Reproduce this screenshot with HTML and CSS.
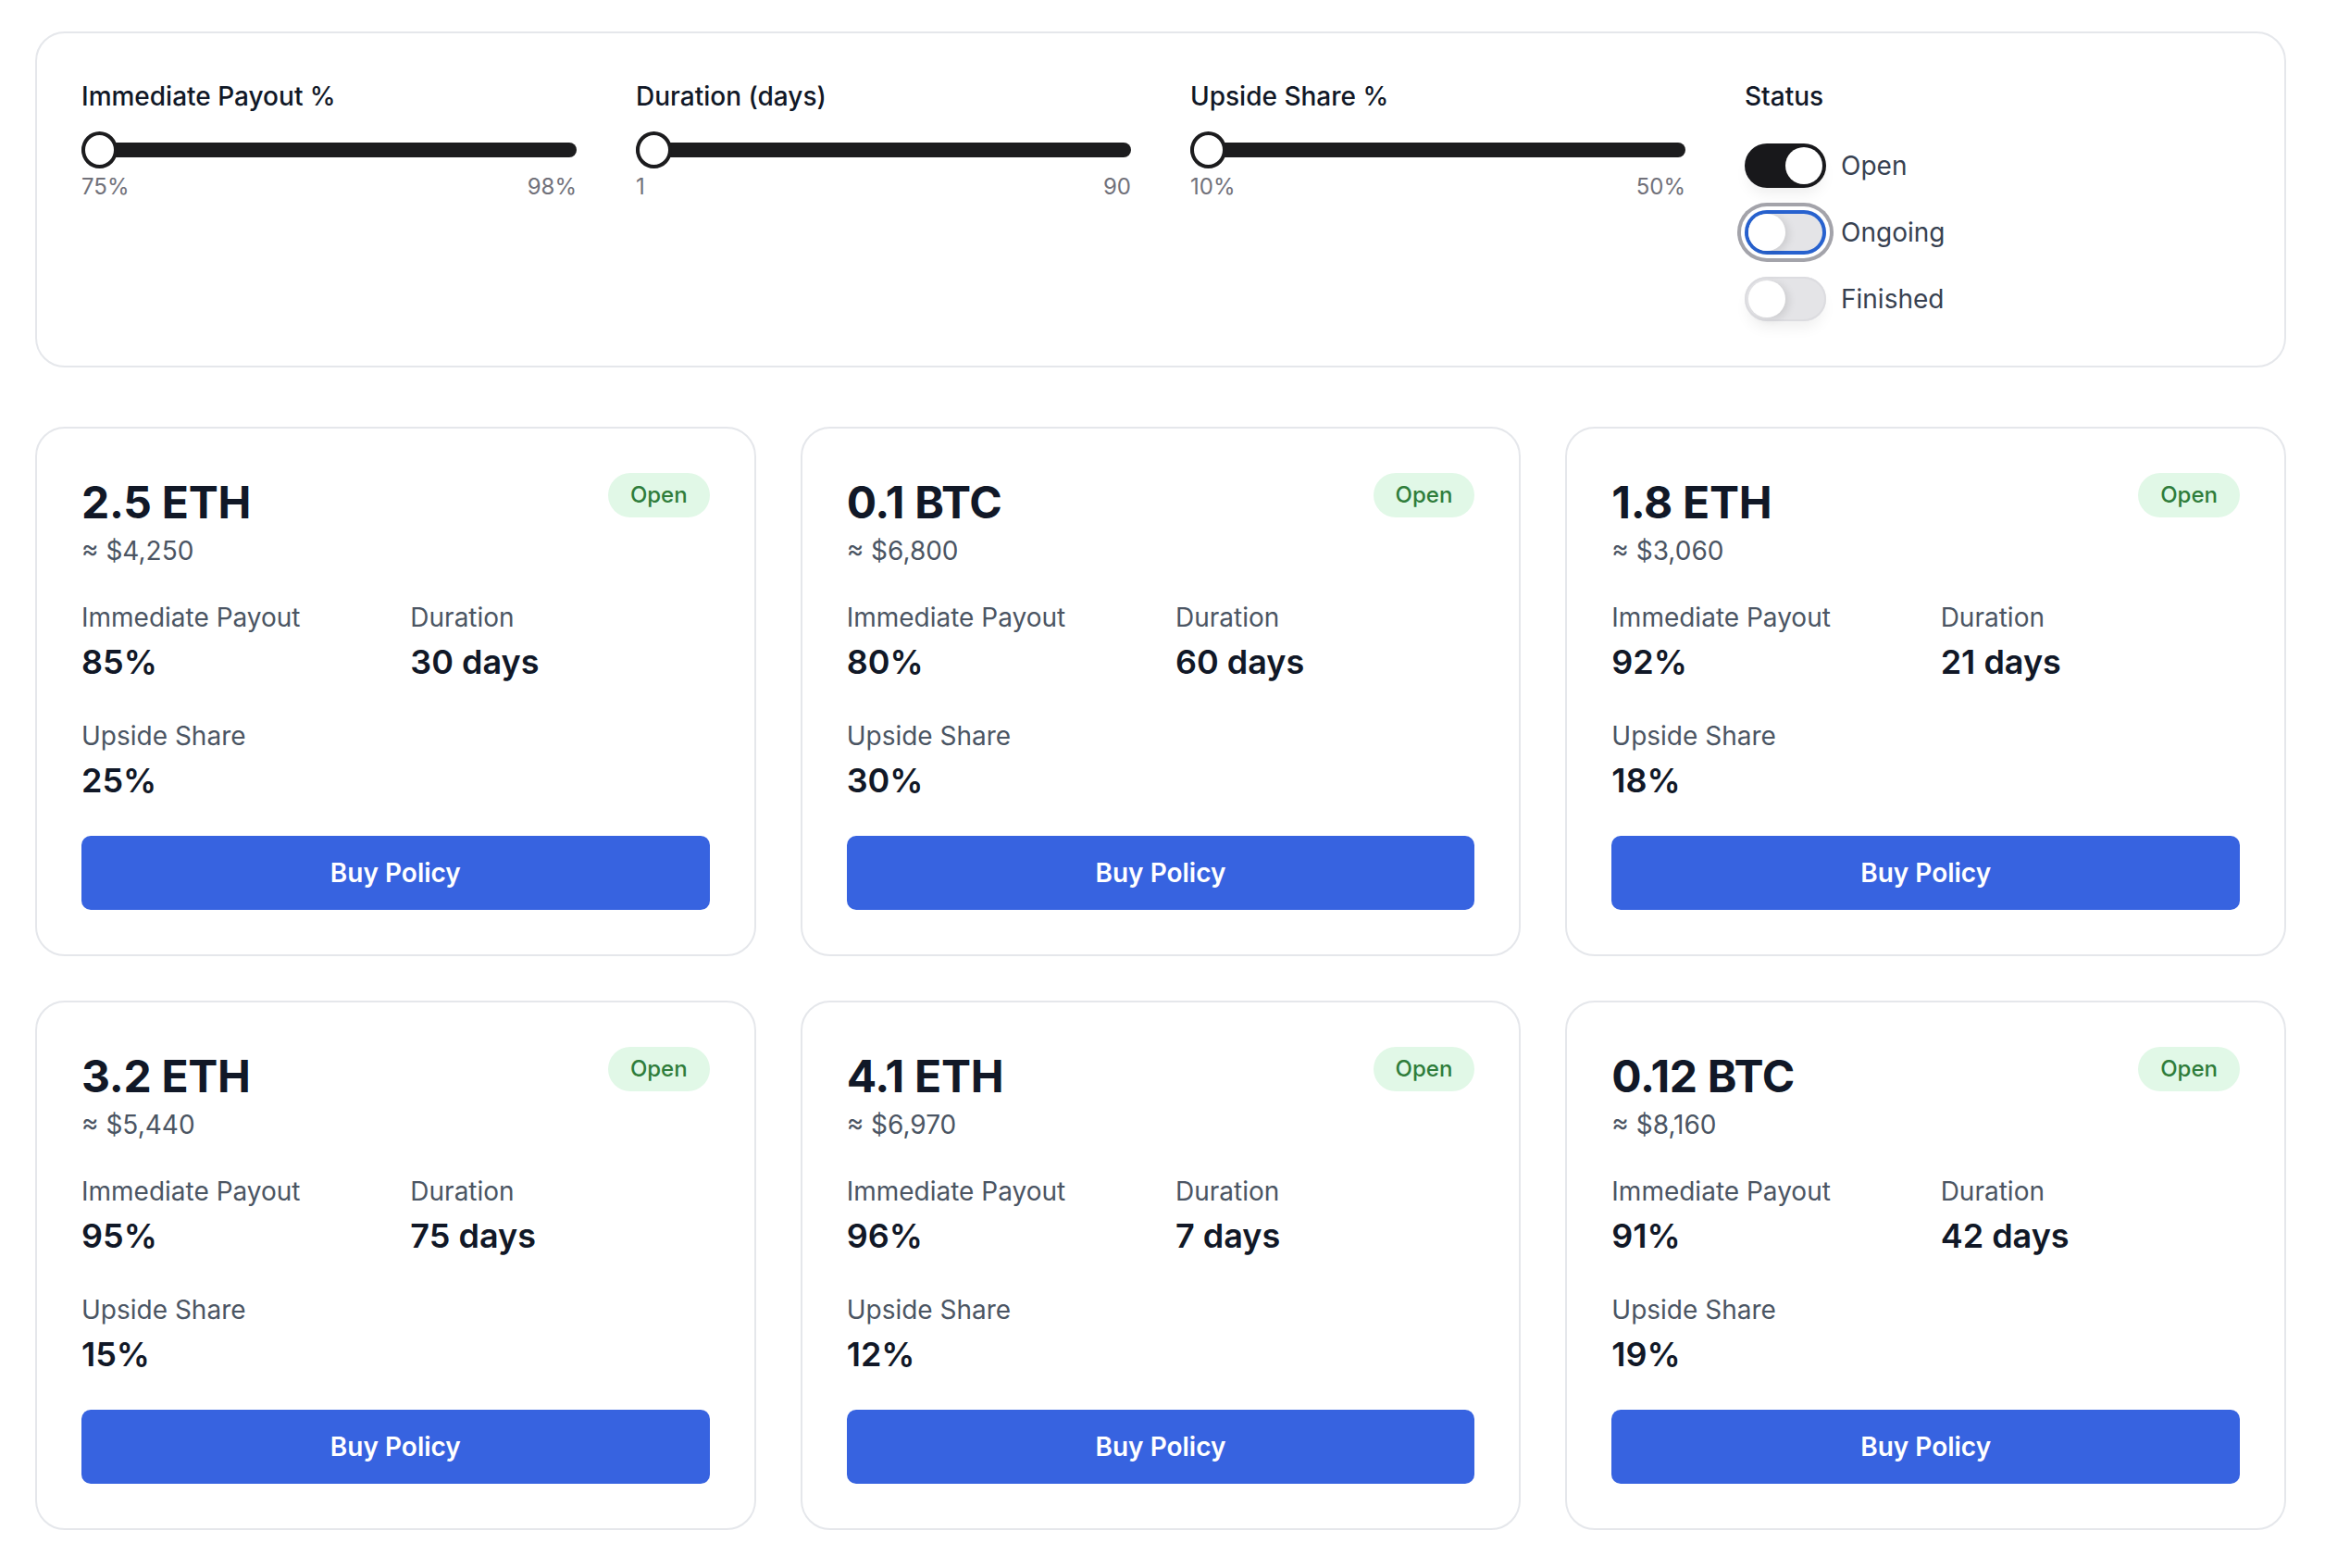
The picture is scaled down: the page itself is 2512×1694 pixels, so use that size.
FILE: index.html
```html
<!DOCTYPE html>
<html lang="en">
<head>
<meta charset="utf-8">
<title>Policies</title>
<link rel="stylesheet" href="styles.css">
</head>
<body>
<div class="page">
  <section class="filters">
    <div class="filter">
      <div class="filter-label">Immediate Payout %</div>
      <input class="range" type="range" min="75" max="98" value="75">
      <div class="range-ends"><span>75%</span><span>98%</span></div>
    </div>
    <div class="filter">
      <div class="filter-label">Duration (days)</div>
      <input class="range" type="range" min="1" max="90" value="1">
      <div class="range-ends"><span>1</span><span>90</span></div>
    </div>
    <div class="filter">
      <div class="filter-label">Upside Share %</div>
      <input class="range" type="range" min="10" max="50" value="10">
      <div class="range-ends"><span>10%</span><span>50%</span></div>
    </div>
    <div class="filter">
      <div class="filter-label">Status</div>
      <div class="toggles">
        <div class="toggle-row"><span class="switch on"><span class="knob"></span></span><span class="toggle-text">Open</span></div>
        <div class="toggle-row"><span class="switch focus"><span class="knob"></span></span><span class="toggle-text">Ongoing</span></div>
        <div class="toggle-row"><span class="switch"><span class="knob"></span></span><span class="toggle-text">Finished</span></div>
      </div>
    </div>
  </section>

  <section class="grid">
    <article class="card">
      <div class="card-head">
        <div>
          <div class="amount">2.5 ETH</div>
          <div class="usd">≈ $4,250</div>
        </div>
        <span class="badge">Open</span>
      </div>
      <div class="stats">
        <div><div class="stat-label">Immediate Payout</div><div class="stat-value">85%</div></div>
        <div><div class="stat-label">Duration</div><div class="stat-value">30 days</div></div>
        <div><div class="stat-label">Upside Share</div><div class="stat-value">25%</div></div>
      </div>
      <button class="buy">Buy Policy</button>
    </article>

    <article class="card">
      <div class="card-head">
        <div>
          <div class="amount">0.1 BTC</div>
          <div class="usd">≈ $6,800</div>
        </div>
        <span class="badge">Open</span>
      </div>
      <div class="stats">
        <div><div class="stat-label">Immediate Payout</div><div class="stat-value">80%</div></div>
        <div><div class="stat-label">Duration</div><div class="stat-value">60 days</div></div>
        <div><div class="stat-label">Upside Share</div><div class="stat-value">30%</div></div>
      </div>
      <button class="buy">Buy Policy</button>
    </article>

    <article class="card">
      <div class="card-head">
        <div>
          <div class="amount">1.8 ETH</div>
          <div class="usd">≈ $3,060</div>
        </div>
        <span class="badge">Open</span>
      </div>
      <div class="stats">
        <div><div class="stat-label">Immediate Payout</div><div class="stat-value">92%</div></div>
        <div><div class="stat-label">Duration</div><div class="stat-value">21 days</div></div>
        <div><div class="stat-label">Upside Share</div><div class="stat-value">18%</div></div>
      </div>
      <button class="buy">Buy Policy</button>
    </article>

    <article class="card">
      <div class="card-head">
        <div>
          <div class="amount">3.2 ETH</div>
          <div class="usd">≈ $5,440</div>
        </div>
        <span class="badge">Open</span>
      </div>
      <div class="stats">
        <div><div class="stat-label">Immediate Payout</div><div class="stat-value">95%</div></div>
        <div><div class="stat-label">Duration</div><div class="stat-value">75 days</div></div>
        <div><div class="stat-label">Upside Share</div><div class="stat-value">15%</div></div>
      </div>
      <button class="buy">Buy Policy</button>
    </article>

    <article class="card">
      <div class="card-head">
        <div>
          <div class="amount">4.1 ETH</div>
          <div class="usd">≈ $6,970</div>
        </div>
        <span class="badge">Open</span>
      </div>
      <div class="stats">
        <div><div class="stat-label">Immediate Payout</div><div class="stat-value">96%</div></div>
        <div><div class="stat-label">Duration</div><div class="stat-value">7 days</div></div>
        <div><div class="stat-label">Upside Share</div><div class="stat-value">12%</div></div>
      </div>
      <button class="buy">Buy Policy</button>
    </article>

    <article class="card">
      <div class="card-head">
        <div>
          <div class="amount">0.12 BTC</div>
          <div class="usd">≈ $8,160</div>
        </div>
        <span class="badge">Open</span>
      </div>
      <div class="stats">
        <div><div class="stat-label">Immediate Payout</div><div class="stat-value">91%</div></div>
        <div><div class="stat-label">Duration</div><div class="stat-value">42 days</div></div>
        <div><div class="stat-label">Upside Share</div><div class="stat-value">19%</div></div>
      </div>
      <button class="buy">Buy Policy</button>
    </article>
  </section>
</div>
</body>
</html>
```

FILE: styles.css
```css
* { box-sizing: border-box; }

html, body {
  margin: 0;
  background: #ffffff;
}

body {
  font-family: Inter, "Noto Sans", "Liberation Sans", sans-serif;
  color: #111827;
  padding: 34px 42px 40px 38px;
}

.page {
  width: 2432px;
}

/* ---------- filters panel ---------- */
.filters {
  border: 2px solid #e5e7eb;
  border-radius: 32px;
  padding: 48px;
  display: grid;
  grid-template-columns: repeat(4, 1fr);
  column-gap: 64px;
  align-items: start;
  margin-bottom: 64px;
}

.filter-label {
  font-size: 28px;
  line-height: 40px;
  font-weight: 500;
  color: #111827;
  margin-bottom: 16px;
}

.range {
  -webkit-appearance: none;
  appearance: none;
  display: block;
  width: 100%;
  height: 44px;
  margin: 0;
  background: transparent;
}

.range::-webkit-slider-runnable-track {
  height: 16px;
  background: #1c1c1e;
  border-radius: 8px;
}

.range::-webkit-slider-thumb {
  -webkit-appearance: none;
  appearance: none;
  box-sizing: border-box;
  width: 39px;
  height: 40px;
  margin-top: -12px;
  border-radius: 50%;
  background: #ffffff;
  border: 4px solid #1c1c1e;
}

.range-ends {
  display: flex;
  justify-content: space-between;
  margin-top: 2px;
  font-size: 24px;
  line-height: 32px;
  color: #71717a;
}

.toggles {
  display: flex;
  flex-direction: column;
  gap: 24px;
  margin-top: 31px;
}

.toggle-row {
  display: flex;
  align-items: center;
  gap: 16px;
}

.switch {
  width: 88px;
  height: 48px;
  border-radius: 24px;
  padding: 4px;
  display: flex;
  align-items: center;
  justify-content: flex-start;
  background: #e4e4e7;
  box-shadow: inset 0 0 0 2px #dcdce0, 0 10px 16px -4px rgba(0, 0, 0, 0.07);
  flex: none;
}

.switch.on {
  background: #18181b;
  justify-content: flex-end;
  box-shadow: 0 10px 16px -4px rgba(0, 0, 0, 0.07);
}

.switch.focus {
  box-shadow: inset 0 0 0 4px #2862cf, 0 0 0 4px #ffffff, 0 0 0 8px #a3a3aa;
}

.knob {
  width: 40px;
  height: 40px;
  border-radius: 50%;
  background: #ffffff;
  box-shadow: 4px 2px 8px rgba(0, 0, 0, 0.10);
}

.switch.on .knob {
  box-shadow: none;
}

.toggle-text {
  font-size: 28px;
  line-height: 40px;
  color: #374151;
}

/* ---------- cards ---------- */
.grid {
  display: grid;
  grid-template-columns: repeat(3, 1fr);
  gap: 48px;
}

.card {
  border: 2px solid #e5e7eb;
  border-radius: 32px;
  padding: 48px;
  background: #ffffff;
}

.card-head {
  display: flex;
  justify-content: space-between;
  align-items: flex-start;
}

.amount {
  font-size: 48px;
  line-height: 64px;
  font-weight: 700;
  color: #111827;
  letter-spacing: -0.3px;
}

.usd {
  font-size: 28px;
  line-height: 40px;
  color: #4b5563;
}

.badge {
  display: inline-block;
  padding: 8px 24px;
  border-radius: 999px;
  background: #e1f8e7;
  color: #2f7d3b;
  font-size: 24px;
  line-height: 32px;
  font-weight: 500;
}

.stats {
  display: grid;
  grid-template-columns: 1fr 1fr;
  gap: 32px;
  margin-top: 32px;
}

.stat-label {
  font-size: 28px;
  line-height: 40px;
  color: #4b5563;
}

.stat-value {
  font-size: 36px;
  line-height: 56px;
  font-weight: 600;
  color: #111827;
}

.buy {
  display: block;
  width: 100%;
  height: 80px;
  margin-top: 32px;
  border: 0;
  border-radius: 10px;
  background: #3763e0;
  color: #ffffff;
  font-family: inherit;
  font-size: 28px;
  font-weight: 600;
  cursor: pointer;
}
```
